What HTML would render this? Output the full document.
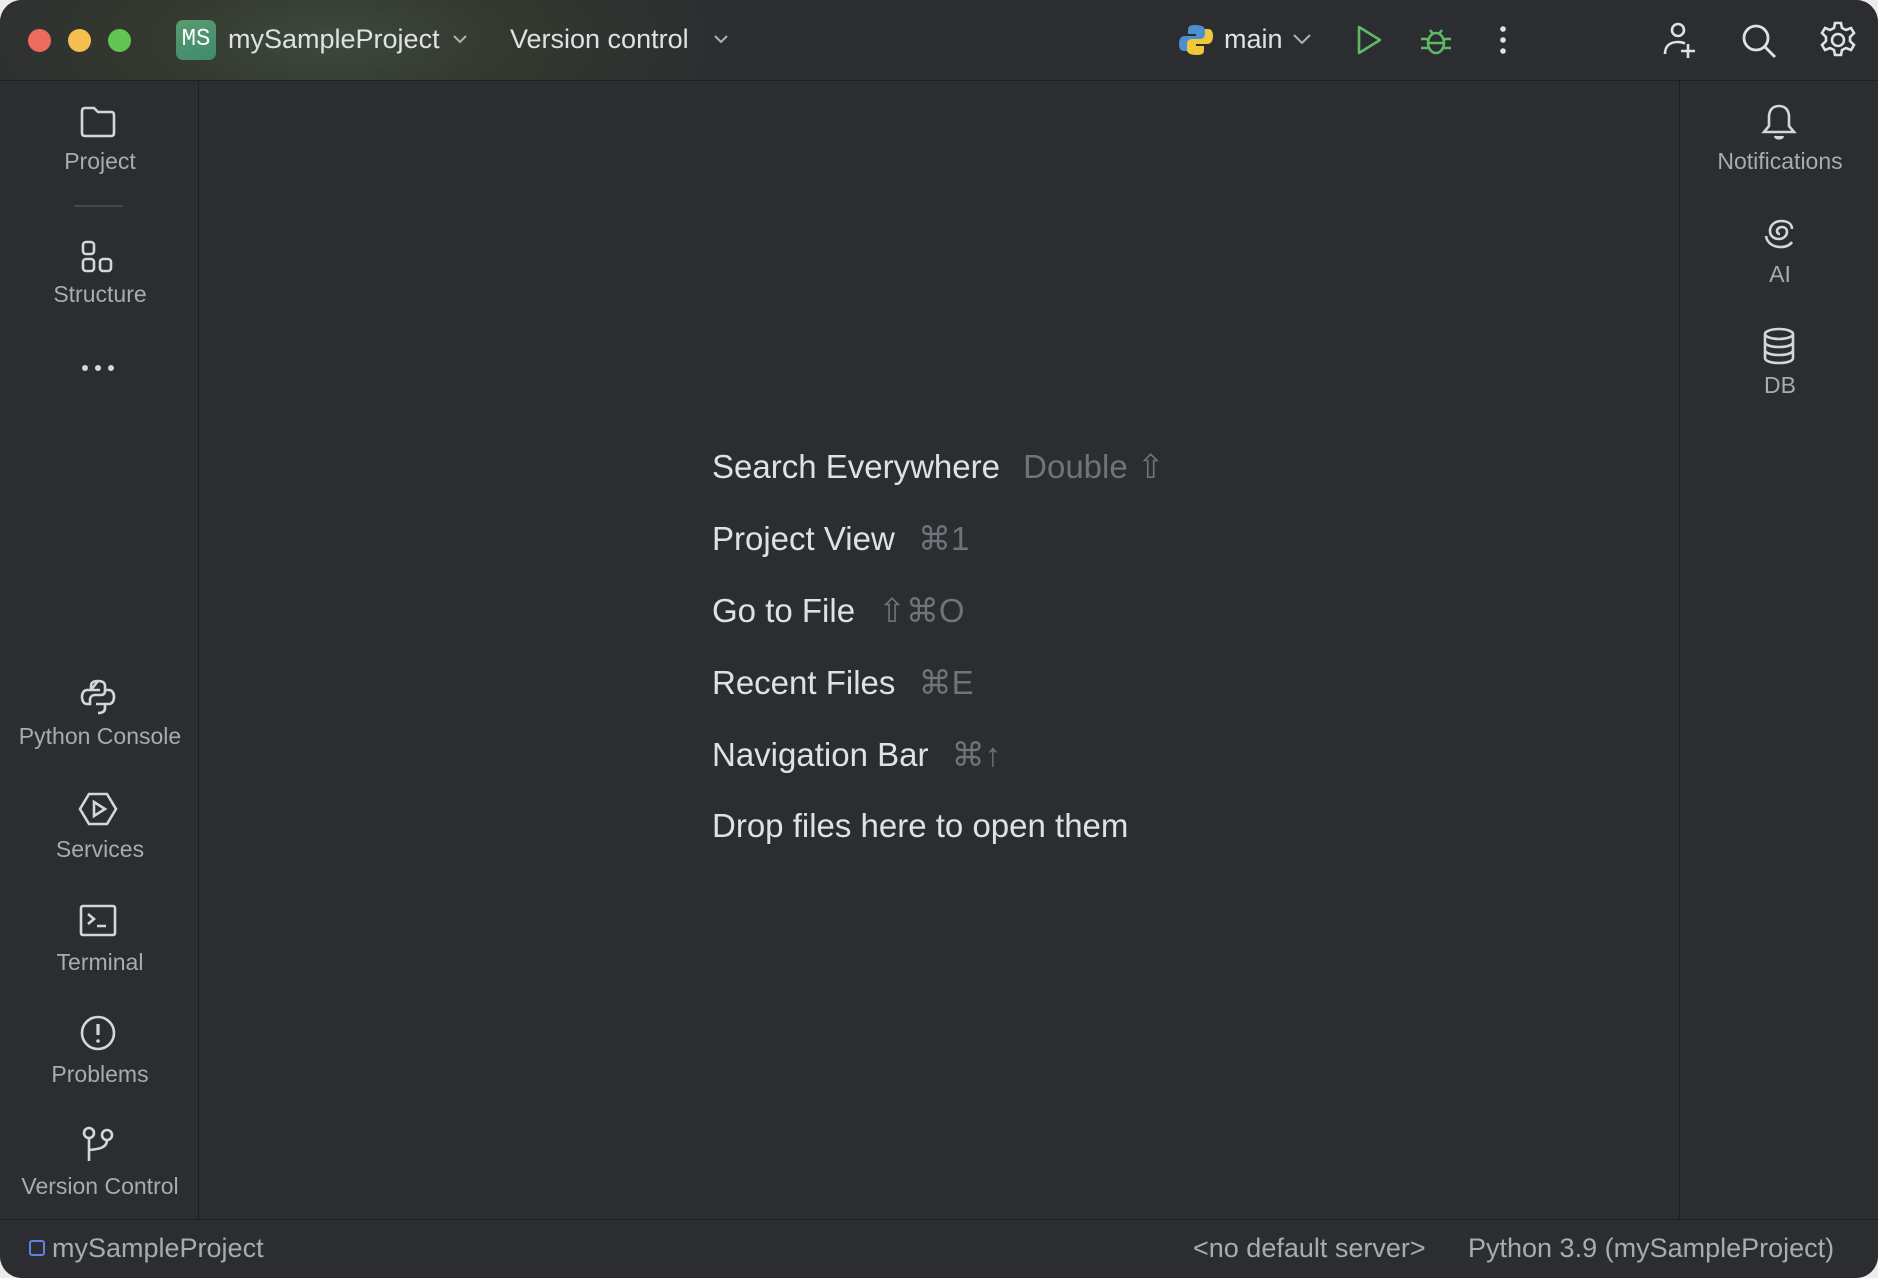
<!DOCTYPE html>
<html><head><meta charset="utf-8"><style>
html,body{margin:0;padding:0;width:1878px;height:1278px;background:#ececec;overflow:hidden}
body{font-family:"Liberation Sans",sans-serif}
.win{position:absolute;left:0;top:0;width:1878px;height:1278px;border-radius:22px;overflow:hidden;background:#2b2d30}
.title{position:absolute;left:0;top:0;width:1878px;height:80px;background:radial-gradient(ellipse 420px 160px at 330px 40px,#3d4a3c 0%,#34392f 40%,#2b2d30 100%);border-bottom:1px solid #1e1f22}
.abs{position:absolute}
.dot{position:absolute;top:29px;width:23px;height:23px;border-radius:50%}
.tt{position:absolute;color:#dfe1e5;font-size:27px;top:24px}
.left{position:absolute;left:0;top:81px;width:198px;height:1138px;border-right:1px solid #1e1f22}
.right{position:absolute;left:1679px;top:81px;width:199px;height:1138px;border-left:1px solid #1e1f22}
.lbl{position:absolute;width:200px;text-align:center;color:#a8abb0;font-size:23px}
.ic{position:absolute}
.status{position:absolute;left:0;top:1219px;width:1878px;height:59px;border-top:1px solid #1e1f22;background:#2b2d30}
.st{position:absolute;top:13px;font-size:27px;color:#a8abb0}
.c{position:absolute;left:712px;font-size:33px;color:#dfe1e5;white-space:nowrap}
.c span{color:#6f737a;margin-left:14px}
</style></head><body>
<div class="win">
<div class="title">
 <div class="dot" style="left:28px;background:#ec6a5e"></div>
 <div class="dot" style="left:68px;background:#f4bf4f"></div>
 <div class="dot" style="left:108px;background:#61c554"></div>
 <div class="abs" style="left:176px;top:20px;width:40px;height:40px;border-radius:7px;background:linear-gradient(160deg,#5a9a6f,#3f8a6e);color:#fff;font-family:'Liberation Mono',monospace;font-size:24px;line-height:40px;text-align:center">MS</div>
 <div class="tt" style="left:228px">mySampleProject</div>
 <svg class="abs" style="left:452px;top:33px" width="16" height="12"><path d="M2 3l6 6 6-6" stroke="#aeb1b6" stroke-width="2" fill="none"/></svg>
 <div class="tt" style="left:510px">Version control</div>
 <svg class="abs" style="left:713px;top:33px" width="16" height="12"><path d="M2 3l6 6 6-6" stroke="#aeb1b6" stroke-width="2" fill="none"/></svg>
 <svg class="abs" style="left:1178px;top:22px" width="36" height="36" viewBox="0 0 36 36"><path d="M17 3c-6 0-7 2-7 5v4h8v2H7c-4 0-6 3-6 8s2 7 5 7h3v-5c0-3 2-5 5-5h8c3 0 5-2 5-5V8c0-3-3-5-10-5z" fill="#4a8fcf"/><path d="M19 33c6 0 7-2 7-5v-4h-8v-2h11c4 0 6-3 6-8s-2-7-5-7h-3v5c0 3-2 5-5 5h-8c-3 0-5 2-5 5v6c0 3 3 5 10 5z" fill="#f0c73b"/></svg>
 <div class="tt" style="left:1224px">main</div>
 <svg class="abs" style="left:1292px;top:33px" width="20" height="12"><path d="M2 2l8 8 8-8" stroke="#aeb1b6" stroke-width="2" fill="none"/></svg>
 <svg class="abs" style="left:1354px;top:24px" width="30" height="32"><path d="M5 3l21 13L5 29z" stroke="#5fb865" stroke-width="2.6" fill="none" stroke-linejoin="round"/></svg>
 <svg class="abs" style="left:1418px;top:22px" width="36" height="36" viewBox="0 0 36 36" fill="none" stroke="#5fb865" stroke-width="2.6"><ellipse cx="18" cy="21" rx="8" ry="10"/><path d="M12 8l3 4M24 8l-3 4M3 17h7M26 17h7M3 26h7M26 26h7M10 21h16"/></svg>
 <svg class="abs" style="left:1497px;top:24px" width="12" height="32"><circle cx="6" cy="5" r="2.8" fill="#dfe1e5"/><circle cx="6" cy="16" r="2.8" fill="#dfe1e5"/><circle cx="6" cy="27" r="2.8" fill="#dfe1e5"/></svg>
 <svg class="abs" style="left:1660px;top:20px" width="40" height="40" viewBox="0 0 40 40" fill="none" stroke="#dfe1e5" stroke-width="2.6"><circle cx="18" cy="10" r="6"/><path d="M5 34c0-8 5-12 13-12 3 0 5 .5 7 1.5M28 24v14M21 31h14"/></svg>
 <svg class="abs" style="left:1740px;top:22px" width="38" height="38" viewBox="0 0 38 38" fill="none" stroke="#dfe1e5" stroke-width="2.8"><circle cx="16" cy="16" r="12"/><path d="M25 25l10 10"/></svg>
 <svg class="abs" style="left:1818px;top:20px" width="40" height="40" viewBox="0 0 40 40" fill="none" stroke="#dfe1e5" stroke-width="2.6"><path d="M17 3h6l1 5 4 2 5-2 3 5-4 4v4l4 4-3 5-5-2-4 2-1 5h-6l-1-5-4-2-5 2-3-5 4-4v-4l-4-4 3-5 5 2 4-2z"/><circle cx="20" cy="20" r="6"/></svg>
</div>
<div class="left">
 <svg class="ic" style="left:79px;top:24px" width="38" height="34" viewBox="0 0 38 34" fill="none" stroke="#d4d6da" stroke-width="2.6"><path d="M3 6c0-2 1-3 3-3h9l4 4h13c2 0 3 1 3 3v18c0 2-1 3-3 3H6c-2 0-3-1-3-3z"/></svg>
 <div class="lbl" style="top:67px">Project</div>
 <div class="abs" style="left:74px;top:124px;width:49px;height:2px;background:#45484d"></div>
 <svg class="ic" style="left:80px;top:158px" width="36" height="36" viewBox="0 0 36 36" fill="none" stroke="#d4d6da" stroke-width="2.6"><rect x="3" y="3" width="11" height="12" rx="3"/><rect x="3" y="20" width="11" height="12" rx="3"/><rect x="20" y="20" width="11" height="12" rx="3"/></svg>
 <div class="lbl" style="top:200px">Structure</div>
 <svg class="ic" style="left:80px;top:281px" width="38" height="12"><circle cx="5" cy="6" r="3" fill="#d4d6da"/><circle cx="18" cy="6" r="3" fill="#d4d6da"/><circle cx="31" cy="6" r="3" fill="#d4d6da"/></svg>
 <svg class="ic" style="left:79px;top:597px" width="38" height="38" viewBox="0 0 38 38" fill="none" stroke="#d4d6da" stroke-width="2.6"><path d="M19 3c-5 0-7 2-7 5v4h9M12 12H8c-3 0-5 3-5 7s2 7 5 7h3v-4c0-3 2-5 5-5h6c3 0 4-2 4-4V8c0-3-2-5-7-5z"/><path d="M19 35c5 0 7-2 7-5v-4h-9M26 26h4c3 0 5-3 5-7s-2-7-5-7h-3"/></svg>
 <div class="lbl" style="top:642px">Python Console</div>
 <svg class="ic" style="left:78px;top:710px" width="40" height="36" viewBox="0 0 40 36" fill="none" stroke="#d4d6da" stroke-width="2.6"><path d="M11 3h18l9 15-9 15H11L2 18z"/><path d="M16 11l11 7-11 7z"/></svg>
 <div class="lbl" style="top:755px">Services</div>
 <svg class="ic" style="left:79px;top:823px" width="38" height="34" viewBox="0 0 38 34" fill="none" stroke="#d4d6da" stroke-width="2.6"><rect x="2" y="2" width="34" height="29" rx="2"/><path d="M9 10l6 5-6 5M18 22h9"/></svg>
 <div class="lbl" style="top:868px">Terminal</div>
 <svg class="ic" style="left:79px;top:933px" width="38" height="38" viewBox="0 0 38 38" fill="none" stroke="#d4d6da" stroke-width="2.6"><circle cx="19" cy="19" r="16"/><path d="M19 10v11" stroke-width="3.2"/><circle cx="19" cy="27" r="1.8" fill="#d4d6da" stroke="none"/></svg>
 <div class="lbl" style="top:980px">Problems</div>
 <svg class="ic" style="left:79px;top:1044px" width="38" height="38" viewBox="0 0 38 38" fill="none" stroke="#d4d6da" stroke-width="2.6"><circle cx="10" cy="8" r="5"/><circle cx="28" cy="10" r="5"/><path d="M10 13v23M28 15c0 7-6 9-18 10"/></svg>
 <div class="lbl" style="top:1092px">Version Control</div>
</div>
<div class="right">
 <svg class="ic" style="left:80px;top:22px" width="38" height="40" viewBox="0 0 38 40" fill="none" stroke="#d4d6da" stroke-width="2.6"><path d="M19 3c-7 0-10 5-10 11v9l-5 6h30l-5-6v-9c0-6-3-11-10-11z"/><path d="M15 33c1 3 7 3 8 0" fill="#d4d6da"/></svg>
 <div class="lbl" style="top:67px">Notifications</div>
 <svg class="ic" style="left:82px;top:133px" width="36" height="36" viewBox="0 0 36 36" fill="none" stroke="#d4d6da" stroke-width="2.6"><path d="M18 20c-2 0-3-1-3-3s2-4 5-4 5 2 5 5-3 7-8 7-9-3-9-8 4-10 11-10 11 3 11 8M4 22c1 7 7 11 15 11 5 0 9-2 11-5"/></svg>
 <div class="lbl" style="top:180px">AI</div>
 <svg class="ic" style="left:82px;top:246px" width="34" height="38" viewBox="0 0 34 38" fill="none" stroke="#d4d6da" stroke-width="2.6"><ellipse cx="17" cy="7" rx="14" ry="5"/><path d="M3 7v24c0 3 6 5 14 5s14-2 14-5V7M3 15c0 3 6 5 14 5s14-2 14-5M3 23c0 3 6 5 14 5s14-2 14-5"/></svg>
 <div class="lbl" style="top:291px">DB</div>
</div>
<div class="c" style="top:447px">Search Everywhere <span>Double ⇧</span></div>
<div class="c" style="top:519px">Project View <span>⌘1</span></div>
<div class="c" style="top:591px">Go to File <span>⇧⌘O</span></div>
<div class="c" style="top:663px">Recent Files <span>⌘E</span></div>
<div class="c" style="top:735px">Navigation Bar <span>⌘↑</span></div>
<div class="c" style="top:807px">Drop files here to open them</div>
<div class="status">
 <div class="abs" style="left:29px;top:20px;width:12px;height:12px;border:2px solid #5a84e0;border-radius:3px"></div>
 <div class="st" style="left:52px">mySampleProject</div>
 <div class="st" style="left:1193px">&lt;no default server&gt;</div>
 <div class="st" style="left:1468px">Python 3.9 (mySampleProject)</div>
</div>
</div>
</body></html>
